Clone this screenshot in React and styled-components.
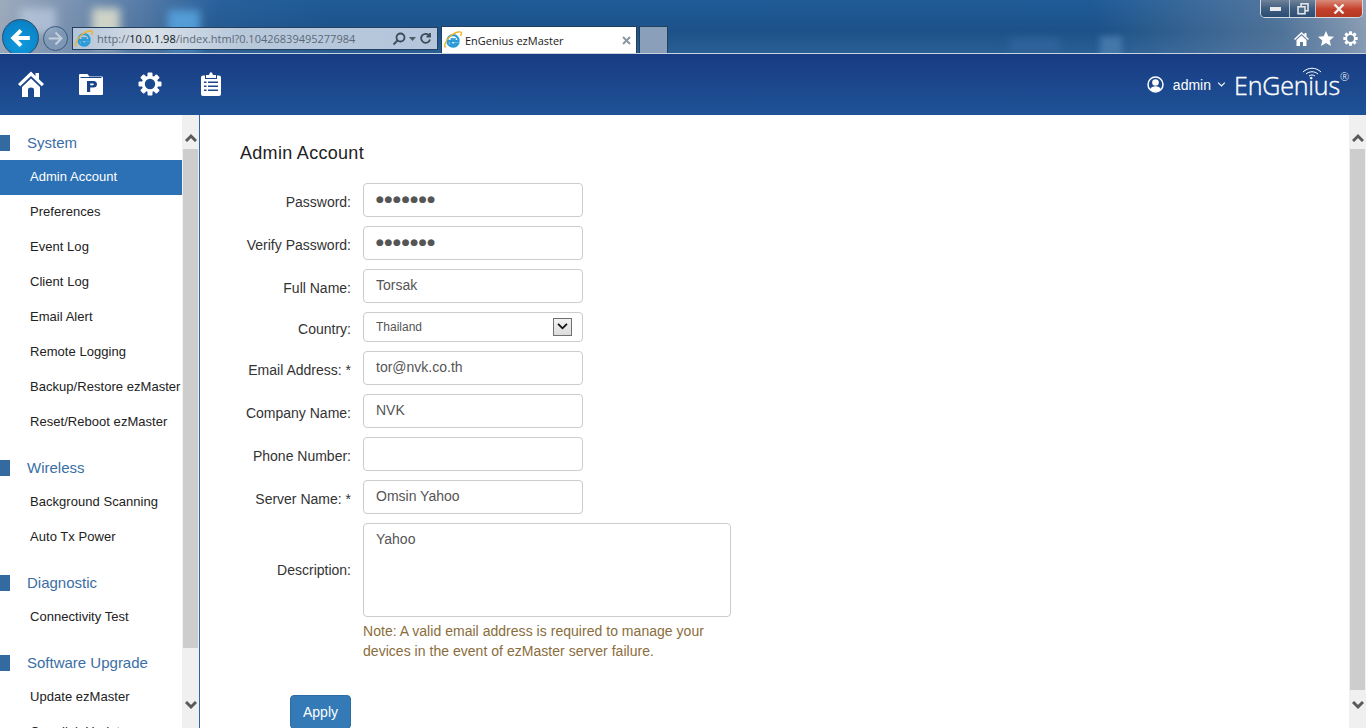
import React from 'react';
import styled, { createGlobalStyle } from 'styled-components';

const GlobalStyle = createGlobalStyle`
  html, body { margin: 0; padding: 0; height: 100%; overflow: hidden; background: #fff; }
  body { font-family: "Liberation Sans", Arial, sans-serif; font-size: 14px; color: #333; }
  * { box-sizing: border-box; }
`;

const Page = styled.div`
  width: 1366px;
  height: 728px;
  display: flex;
  flex-direction: column;
  overflow: hidden;
`;

/* browser chrome */
const Chrome = styled.div`
  position: relative;
  height: 54px;
  flex: none;
  overflow: hidden;
  border-bottom: 1px solid #c9d3de;
  background:
    linear-gradient(105deg, rgba(165,175,190,.95) 0, rgba(130,150,180,.65) 9%, rgba(60,110,165,.3) 16%, rgba(30,85,145,0) 24%),
    linear-gradient(250deg, rgba(165,175,190,.85) 0, rgba(120,140,165,.55) 7%, rgba(30,70,115,0) 20%),
    linear-gradient(180deg, #1f5b98 0, #1c5288 60%, #2a5f96 100%);
`;

const Blob = styled.div`
  position: absolute;
  left: ${p => p.$x}px;
  top: ${p => p.$y}px;
  width: ${p => p.$w}px;
  height: ${p => p.$h}px;
  background: ${p => p.$c};
  filter: blur(${p => p.$blur || 4}px);
`;

const WindowButtons = styled.div`
  position: relative;
  height: 19px;
  display: flex;
  justify-content: flex-end;
  padding-right: 3px;
`;

const WindowFrame = styled.div`
  display: flex;
  height: 18px;
  border: 1px solid #d5dbe2;
  border-top: 0;
  border-radius: 0 0 5px 5px;
  overflow: hidden;
`;

const WindowBtn = styled.div`
  width: ${p => p.$w}px;
  display: flex;
  align-items: center;
  justify-content: center;
  border-left: ${p => (p.$first ? 0 : '1px solid #b9c4d0')};
  background: ${p => p.$close
    ? 'linear-gradient(180deg, #d98a7a 0, #c4402a 55%, #b33a25 100%)'
    : 'linear-gradient(180deg, #6f8298 0, #3f5e80 50%, #2b4d72 100%)'};
`;

const ToolRow = styled.div`
  position: relative;
  height: 34px;
  display: flex;
  align-items: flex-end;
  padding-left: 2px;
`;

const BackBtn = styled.div`
  width: 37px;
  height: 37px;
  margin-bottom: -3px;
  border-radius: 50%;
  border: 1px solid #2f4a68;
  background: radial-gradient(circle at 50% 70%, #1199dd 0, #0a84c8 70%, #0874b0 100%);
  display: flex;
  align-items: center;
  justify-content: center;
  flex: none;
`;

const ForwardBtn = styled.div`
  width: 25px;
  height: 25px;
  margin: 0 4px 2px 4px;
  border-radius: 50%;
  border: 1px solid #3b5a7e;
  background: rgba(130,155,185,.5);
  display: flex;
  align-items: center;
  justify-content: center;
  flex: none;
`;

const UrlBar = styled.div`
  width: 366px;
  height: 23px;
  margin-bottom: 3px;
  flex: none;
  display: flex;
  align-items: center;
  gap: 3px;
  padding: 0 5px 0 1px;
  border: 1px solid #23405f;
  background: linear-gradient(90deg, #b4c4d8 0, #d8e0e8 22%, #b9c9dc 45%, #b4c6dc 100%);
  font-family: "Open Sans", sans-serif;
  font-size: 11px;
  color: #5b6877;
  white-space: nowrap;
`;

const UrlText = styled.span`
  flex: 1;
  b { font-weight: 400; color: #0f1620; }
`;

const Tab = styled.div`
  width: 196px;
  height: 27px;
  margin-left: 3px;
  flex: none;
  display: flex;
  align-items: center;
  gap: 2px;
  padding: 0 5px 0 1px;
  background: #fff;
  border: 1px solid #23405f;
  border-bottom: 0;
  font-family: "Open Sans", sans-serif;
  font-size: 11px;
  color: #1a1a1a;
`;

const TabTitle = styled.span`
  flex: 1;
`;

const NewTab = styled.div`
  width: 29px;
  height: 27px;
  margin-left: 2px;
  flex: none;
  background: #8a9fba;
  border: 1px solid #23405f;
  border-bottom: 0;
`;

const ChromeTools = styled.div`
  margin-left: auto;
  margin-bottom: 7px;
  padding-right: 8px;
  display: flex;
  align-items: center;
  gap: 9px;
`;

/* app header */
const NavBar = styled.header`
  height: 61px;
  flex: none;
  display: flex;
  align-items: center;
  padding: 0 17px 0 18px;
  background: linear-gradient(180deg, #183c84 0, #1f5296 100%);
  color: #fff;
`;

const NavIcons = styled.nav`
  display: flex;
  align-items: center;
  gap: 35px;
  margin-top: -1px;
`;

const NavIcon = styled.span`
  display: flex;
  width: ${p => p.$w}px;
  justify-content: center;
`;

const UserMenu = styled.div`
  margin-left: auto;
  display: flex;
  align-items: center;
  font-size: 14px;
`;

const UserName = styled.span`
  margin: 0 6px 0 9px;
`;

const Logo = styled.div`
  position: relative;
  margin-left: 8px;
  font-family: "Open Sans", sans-serif;
  font-weight: 300;
  font-size: 25px;
  line-height: 30px;
  letter-spacing: -0.15px;
  -webkit-text-stroke: 0.4px #fff;
  display: flex;
`;

const LogoMark = styled.sup`
  font-size: 11px;
  line-height: 12px;
  margin-top: 1px;
  -webkit-text-stroke: 0;
`;

const LogoWaves = styled.svg`
  position: absolute;
  left: 68px;
  top: -3px;
`;

/* body */
const Body = styled.div`
  flex: 1;
  display: flex;
  min-height: 0;
`;

const Sidebar = styled.aside`
  width: 200px;
  flex: none;
  display: flex;
  border-right: 1px solid #2d6aa5;
  overflow: hidden;
`;

const SideMenu = styled.div`
  width: 182px;
  flex: none;
  height: 100%;
  overflow: hidden;
`;

const GroupTitle = styled.div`
  position: relative;
  height: 45px;
  padding: 17px 0 0 27px;
  font-size: 15px;
  line-height: 22px;
  color: #3a6ea5;
  &::before {
    content: '';
    position: absolute;
    left: 0;
    top: 20px;
    width: 10px;
    height: 16px;
    background: #336a9f;
  }
`;

const MenuItem = styled.div`
  height: 35px;
  line-height: 33px;
  padding-left: 30px;
  font-size: 13px;
  letter-spacing: 0.04px;
  white-space: nowrap;
  color: ${p => (p.$active ? '#fff' : '#222')};
  background: ${p => (p.$active ? '#2c70b5' : 'transparent')};
`;

const Scrollbar = styled.div`
  width: ${p => p.$w}px;
  flex: none;
  height: 100%;
  display: flex;
  flex-direction: column;
  align-items: center;
  background: #f0f0f0;
`;

const ScrollArrow = styled.div`
  height: 34px;
  flex: none;
  width: 100%;
  display: flex;
  justify-content: center;
  align-items: ${p => (p.$up ? 'flex-end' : 'flex-start')};
  padding: ${p => (p.$up ? '0 0 7px' : '7px 0 0')};
`;

const ScrollThumb = styled.div`
  width: 15px;
  height: ${p => p.$h}px;
  flex: none;
  background: #cdcdcd;
`;

const ScrollSpacer = styled.div`
  flex: 1;
`;

const Main = styled.main`
  flex: 1;
  min-width: 0;
  padding: 27px 0 0 40px;
  overflow: hidden;
`;

const Title = styled.h1`
  margin: 0 0 19px;
  font-size: 18px;
  letter-spacing: 0.3px;
  font-weight: 400;
  line-height: 22px;
  color: #222;
`;

const Form = styled.form`
  display: flex;
  flex-direction: column;
  gap: 9px;
`;

const Row = styled.div`
  display: flex;
  align-items: ${p => (p.$center ? 'center' : 'flex-start')};
`;

const Label = styled.label`
  width: 111px;
  margin-right: 12px;
  padding-top: ${p => p.$top}px;
  text-align: right;
  font-size: 14px;
  line-height: 20px;
  color: #333;
  white-space: nowrap;
`;

const Input = styled.input`
  width: 220px;
  height: 34px;
  padding: 0 12px 3px;
  border: 1px solid #ccc;
  border-radius: 4px;
  background: #fff;
  font: ${p => (p.$masked ? '9px "DejaVu Sans", sans-serif' : '14px "Liberation Sans", Arial, sans-serif')};
  letter-spacing: ${p => (p.$masked ? '0.7px' : 'normal')};
  color: #555;
  outline: none;
`;

const SelectBox = styled.div`
  width: 220px;
  height: 30px;
  padding: 0 10px 0 12px;
  display: flex;
  align-items: center;
  justify-content: space-between;
  border: 1px solid #ccc;
  border-radius: 4px;
  font-size: 12px;
  color: #555;
`;

const SelectArrow = styled.span`
  width: 19px;
  height: 18px;
  display: flex;
  align-items: center;
  justify-content: center;
  border: 1px solid #707070;
  background: linear-gradient(180deg, #f2f2f2, #dcdcdc);
`;

const TextArea = styled.textarea`
  width: 368px;
  height: 94px;
  padding: 5px 12px;
  border: 1px solid #ccc;
  border-radius: 4px;
  font: 14px/20px "Liberation Sans", Arial, sans-serif;
  color: #555;
  resize: none;
  outline: none;
`;

const Note = styled.p`
  margin: 4px 0 0 123px;
  width: 370px;
  font-size: 14px;
  letter-spacing: 0.03px;
  line-height: 20px;
  color: #8a6d3b;
`;

const ApplyBtn = styled.button`
  display: block;
  width: 61px;
  height: 34px;
  margin: 34px 0 0 50px;
  border: 1px solid #2e6da4;
  border-radius: 4px;
  background: #337ab7;
  color: #fff;
  font: 14px "Liberation Sans", Arial, sans-serif;
`;

const IeLogo = ({ size = 20 }) => (
  <svg width={size} height={size} viewBox="0 0 20 20" fill="none">
    <path d="M4.600 11.200h10.900c.3-3.400-2-6-5.300-6-3.300 0-5.800 2.500-5.800 5.700 0 3.300 2.500 5.700 5.700 5.700 2.300 0 4.100-1 5-3h-3c-.5.7-1.100 1-2 1-1.500 0-2.600-1-2.700-2.500" stroke="#2a9ad8" strokeWidth="2.200" />
    <path d="M7.500 9h5.300" stroke="#2a9ad8" strokeWidth="1.800" />
    <path d="M3 16.500C.5 18.800 1.600 10.500 8 5.500c5-3.800 9.800-4.500 10.500-2.700.3.800-.2 2-1 3" stroke="#f0b429" strokeWidth="1.400" />
  </svg>
);

const HomeIcon = () => (
  <svg width="26" height="26" viewBox="0 0 26 26" fill="#fff">
    <path d="M13 .5 0 13l2.200 2.300L13 5l10.800 10.300L26 13l-5-4.800V2h-3.500v2.900L13 .5z" />
    <path d="M13 7.500 4 16v10h6v-7.500c0-1.200 1.300-2 3-2s3 .8 3 2V26h6V16l-9-8.500z" />
  </svg>
);

const FolderIcon = () => (
  <svg width="24" height="21" viewBox="0 0 24 21">
    <path fill="#fff" d="M1 0h7.500l2 2.500H23a1 1 0 0 1 1 1V20a1 1 0 0 1-1 1H1a1 1 0 0 1-1-1V1a1 1 0 0 1 1-1z" />
    <path fill="#1b4389" d="M1.500 3h21v1h-21z" />
    <path fill="#1b4389" fillRule="evenodd" d="M8 7h6.500c2.300 0 3.500 1.300 3.500 3.300s-1.300 3.300-3.500 3.300h-3.300V18H8V7zm3.200 2.500v1.700h2.500c.7 0 1.100-.3 1.100-.9s-.4-.8-1.100-.8h-2.500z" />
  </svg>
);

const GearIcon = ({ size = 24, hole = 5.200, holeColor = '#1c4a8e' }) => {
  const teeth = [0, 45, 90, 135];
  return (
    <svg width={size} height={size} viewBox="0 0 24 24">
      {teeth.map(a => (
        <rect key={a} x="9.500" y="0.500" width="5" height="23" rx="1" fill="#fff" transform={`rotate(${a} 12 12)`} />
      ))}
      <circle cx="12" cy="12" r="8.300" fill="#fff" />
      <circle cx="12" cy="12" r={hole} fill={holeColor} />
    </svg>
  );
};

const ClipboardIcon = () => (
  <svg width="20" height="24" viewBox="0 0 20 24" fill="#fff">
    <path fillRule="evenodd" d="M8 3l1-2.500h2L12 3h3v3H5V3h3zM2 3.500h2V7h12V3.500h2a2 2 0 0 1 2 2V22a2 2 0 0 1-2 2H2a2 2 0 0 1-2-2V5.500a2 2 0 0 1 2-2zM3 9.500V11h2.500V9.500H3zm4 0V11h10V9.500H7zM3 13.500V15h2.500v-1.500H3zm4 0V15h10v-1.500H7zM3 17.500V19h2.500v-1.500H3zm4 0V19h10v-1.500H7z" />
  </svg>
);

const UserIcon = () => (
  <svg width="17" height="17" viewBox="0 0 17 17">
    <circle cx="8.500" cy="8.500" r="7.500" fill="none" stroke="#fff" strokeWidth="1.500" />
    <circle cx="8.500" cy="6.500" r="3.300" fill="#fff" />
    <path d="M3 13.500c.8-2.300 3-3.300 5.500-3.300s4.700 1 5.500 3.300c-1.400 1.300-3.400 2-5.500 2s-4.100-.7-5.500-2z" fill="#fff" />
  </svg>
);

const Chevron = ({ up, color = '#5a5a5a', w = 12, h = 9, sw = 3 }) => (
  <svg width={w} height={h} viewBox="0 0 12 9" fill="none">
    <path d={up ? 'M1 8l5-5 5 5' : 'M1 1l5 5 5-5'} stroke={color} strokeWidth={sw} />
  </svg>
);

const Arrow = ({ size, color, sw, right }) => (
  <svg width={size} height={size} viewBox="0 0 20 20" fill="none">
    <path d={right ? 'M2 10h15M10 3l7 7-7 7' : 'M18 10H3M10 3l-7 7 7 7'} stroke={color} strokeWidth={sw} />
  </svg>
);

const GROUPS = [
  { title: 'System', items: ['Admin Account', 'Preferences', 'Event Log', 'Client Log', 'Email Alert', 'Remote Logging', 'Backup/Restore ezMaster', 'Reset/Reboot ezMaster'] },
  { title: 'Wireless', items: ['Background Scanning', 'Auto Tx Power'] },
  { title: 'Diagnostic', items: ['Connectivity Test'] },
  { title: 'Software Upgrade', items: ['Update ezMaster', 'Openlink Update'] },
];

const FIELDS_TOP = [
  { label: 'Password:', value: '●●●●●●●', masked: true },
  { label: 'Verify Password:', value: '●●●●●●●', masked: true },
  { label: 'Full Name:', value: 'Torsak' },
];

const FIELDS_BOTTOM = [
  { label: 'Email Address: *', value: 'tor@nvk.co.th' },
  { label: 'Company Name:', value: 'NVK' },
  { label: 'Phone Number:', value: '' },
  { label: 'Server Name: *', value: 'Omsin Yahoo' },
];

const Field = ({ label, value, masked }) => (
  <Row>
    <Label $top={9}>{label}</Label>
    <Input $masked={masked} value={value} readOnly />
  </Row>
);

export default function App() {
  return (
    <Page>
      <GlobalStyle />
      <Chrome>
        <Blob $x={20} $y={8} $w={36} $h={26} $c="rgba(190,205,225,.7)" />
        <Blob $x={92} $y={8} $w={28} $h={40} $c="rgba(225,225,205,.85)" />
        <Blob $x={168} $y={10} $w={32} $h={40} $c="rgba(90,170,230,.8)" />
        <Blob $x={1100} $y={36} $w={22} $h={24} $c="rgba(80,130,180,.7)" $blur={3} />
        <Blob $x={1010} $y={38} $w={50} $h={14} $c="rgba(60,110,165,.5)" $blur={5} />
        <WindowButtons>
          <WindowFrame>
            <WindowBtn $w={28} $first>
              <svg width="11" height="4"><rect width="11" height="4" fill="#e8ecf0" /></svg>
            </WindowBtn>
            <WindowBtn $w={26}>
              <svg width="12" height="12" viewBox="0 0 12 12" fill="none" stroke="#e8ecf0" strokeWidth="1.500">
                <rect x="4" y=".8" width="7" height="7" />
                <rect x="1" y="3.800" width="7" height="7" fill="#4d6a88" />
              </svg>
            </WindowBtn>
            <WindowBtn $w={47} $close>
              <svg width="12" height="10" viewBox="0 0 12 10" fill="none" stroke="#f4f0ee" strokeWidth="2.400">
                <path d="M1.500 .5l9 9M10.500 .5l-9 9" />
              </svg>
            </WindowBtn>
          </WindowFrame>
        </WindowButtons>
        <ToolRow>
          <BackBtn><Arrow size={22} color="#fff" sw={3.600} /></BackBtn>
          <ForwardBtn><Arrow size={17} color="#c3cfdd" sw={2.400} right /></ForwardBtn>
          <UrlBar>
            <IeLogo />
            <UrlText>http://<b>10.0.1.98</b>/index.html?0.10426839495277984</UrlText>
            <svg width="14" height="14" viewBox="0 0 14 14" fill="none" stroke="#3d4a58" strokeWidth="1.800">
              <circle cx="8.500" cy="5.500" r="4" /><path d="M5.500 8.500 1.500 12.500" />
            </svg>
            <svg width="7" height="4"><path d="M0 0h7L3.500 4z" fill="#4d5a68" /></svg>
            <svg width="13" height="13" viewBox="0 0 13 13" fill="none" stroke="#3d4a58" strokeWidth="1.800">
              <path d="M10.500 4A4.500 4.500 0 1 0 11 7.500" /><path d="M7.500 4.500h3.500V1" />
            </svg>
          </UrlBar>
          <Tab>
            <IeLogo />
            <TabTitle>EnGenius ezMaster</TabTitle>
            <svg width="9" height="9" viewBox="0 0 9 9" stroke="#8d97a3" strokeWidth="2"><path d="M1 1l7 7M8 1L1 8" /></svg>
          </Tab>
          <NewTab />
          <ChromeTools>
            <svg width="15" height="14" viewBox="0 0 15 14" fill="#fff">
              <path d="M7.500 0 0 7l1 1 6.500-6 6.500 6 1-1-2.500-2.300V1h-2v1.800z" />
              <path d="M7.500 3.500 2.500 8v6h3.500v-4h3v4h3.500V8z" />
            </svg>
            <svg width="16" height="15" viewBox="0 0 16 15" fill="#fff"><path d="M8 0l2.300 5.200 5.700.5-4.300 3.700 1.300 5.600L8 12l-5 3 1.300-5.600L0 5.700l5.700-.5z" /></svg>
            <GearIcon size={15} hole={5.500} holeColor="#6e859e" />
          </ChromeTools>
        </ToolRow>
      </Chrome>

      <NavBar>
        <NavIcons>
          <NavIcon $w={26}><HomeIcon /></NavIcon>
          <NavIcon $w={24}><FolderIcon /></NavIcon>
          <NavIcon $w={24}><GearIcon /></NavIcon>
          <NavIcon $w={28}><ClipboardIcon /></NavIcon>
        </NavIcons>
        <UserMenu>
          <UserIcon />
          <UserName>admin</UserName>
          <Chevron color="#fff" w={9} h={6} sw={1.600} />
          <Logo>
            EnGenius
            <LogoMark>®</LogoMark>
            <LogoWaves width="20" height="10" viewBox="0 0 20 10" fill="none" stroke="#fff" strokeWidth="1">
              <path d="M1 5c5-5 13-5 18 0M4 7c3.500-3 8.500-3 12 0M7 9c2-1.300 4-1.300 6 0" />
            </LogoWaves>
          </Logo>
        </UserMenu>
      </NavBar>

      <Body>
        <Sidebar>
          <SideMenu>
            {GROUPS.map(g => (
              <div key={g.title}>
                <GroupTitle>{g.title}</GroupTitle>
                {g.items.map(item => (
                  <MenuItem key={item} $active={item === 'Admin Account'}>{item}</MenuItem>
                ))}
              </div>
            ))}
          </SideMenu>
          <Scrollbar $w={17}>
            <ScrollArrow $up><Chevron up /></ScrollArrow>
            <ScrollThumb $h={499} />
            <ScrollSpacer />
            <ScrollArrow><Chevron /></ScrollArrow>
          </Scrollbar>
        </Sidebar>
        <Main>
          <Title>Admin Account</Title>
          <Form>
            {FIELDS_TOP.map(f => <Field key={f.label} {...f} />)}
            <Row $center>
              <Label $top={4}>Country:</Label>
              <SelectBox>
                Thailand
                <SelectArrow><Chevron color="#111" w={11} h={8} sw={2} /></SelectArrow>
              </SelectBox>
            </Row>
            {FIELDS_BOTTOM.map(f => <Field key={f.label} {...f} />)}
            <Row $center>
              <Label $top={0}>Description:</Label>
              <TextArea value="Yahoo" readOnly />
            </Row>
          </Form>
          <Note>Note: A valid email address is required to manage your devices in the event of ezMaster server failure.</Note>
          <ApplyBtn type="button">Apply</ApplyBtn>
        </Main>
        <Scrollbar $w={17}>
          <ScrollArrow $up><Chevron up /></ScrollArrow>
          <ScrollThumb $h={541} />
          <ScrollSpacer />
          <ScrollArrow><Chevron /></ScrollArrow>
        </Scrollbar>
      </Body>
    </Page>
  );
}
